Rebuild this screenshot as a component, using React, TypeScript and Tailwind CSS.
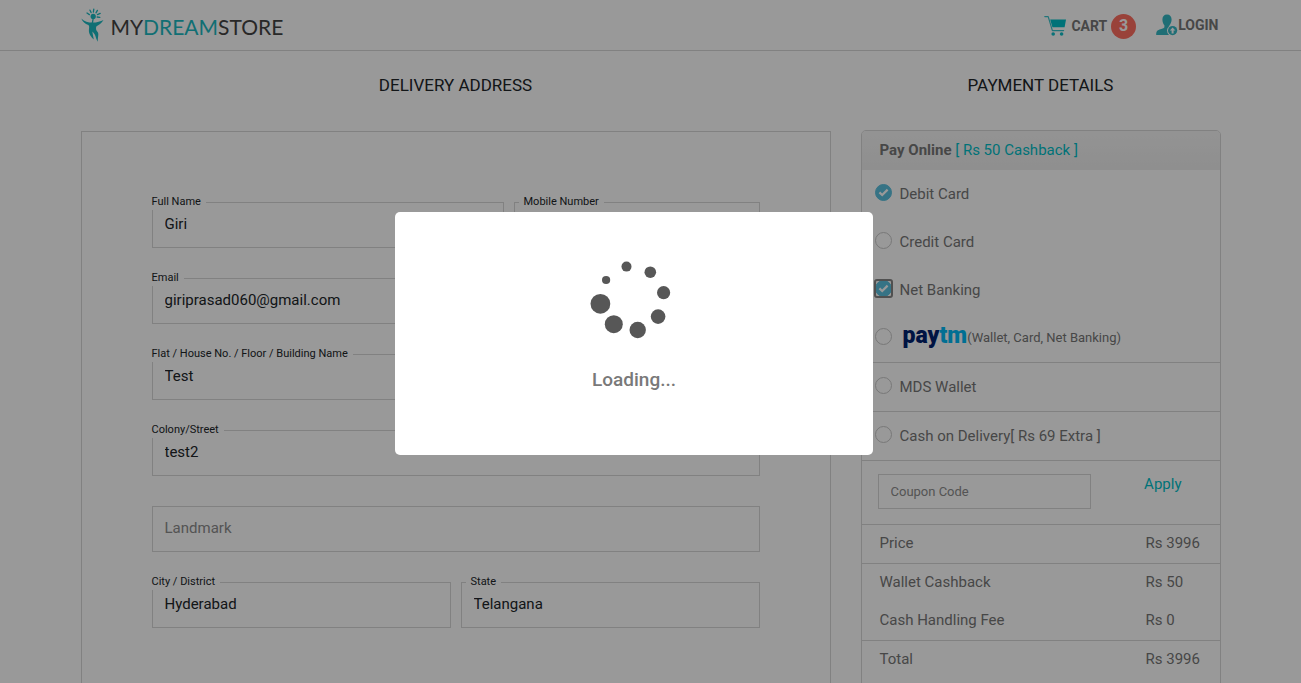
import React from "react";

function Logo() {
  return (
    <a href="#home" aria-label="MyDreamStore" className="flex items-center gap-1.5">
      <svg width="24" height="34" viewBox="0 0 24 34" fill="none" className="shrink-0">
        <path d="M0.3 10.4 C3.5 13.6 7 14.6 11.5 14.6 C16 14.6 19.5 13.5 22.5 12 C20.5 15.6 17.6 17.2 15.5 18.2 C14.4 20.4 15.2 22.5 16.6 24 C18.2 26 16.6 29 16.9 33.8 C14.9 31 14.8 28 13.6 26.2 C12.9 25 12 24.2 11.4 23.4 C11.6 26 12.4 28.4 12.8 31.6 C10.1 29 7.6 25.6 7.9 22 C8.1 19.5 8.6 18.3 7.4 17 C4 15.6 1.6 13.5 0.3 10.4Z" fill="#1cb9c1" />
        <circle cx="12.2" cy="8.4" r="2.6" fill="#1cb9c1" />
        <path d="M12.2 10.5 L11.4 14.8 M12.8 1.2 L12.4 4 M9 2.2 L10.1 4.6 M16.4 2.4 L15 4.8 M6 5 L8.4 6.6 M19.2 5.4 L16.4 6.6 M16.2 9 L18.8 9.4" stroke="#1cb9c1" strokeWidth="1.3" strokeLinecap="round" />
      </svg>
      <span className="pt-1 font-['Lato',sans-serif] text-[21px] leading-8 text-[#444]">
        MY<span className="text-[#1cb9c1]">DREAM</span>STORE
      </span>
    </a>
  );
}

function CartIcon() {
  return (
    <svg width="23" height="22" viewBox="0 0 23 22" fill="none" className="shrink-0">
      <path d="M0.8 1.6 H4.2 L8.4 15.6 H19.6" stroke="#3ac3cb" strokeWidth="1.2" strokeLinecap="round" strokeLinejoin="round" />
      <path d="M6.2 4.4 H22 L20.6 12.2 H8.4Z" fill="#00bfc8" />
      <circle cx="9.2" cy="19" r="1.8" fill="#12bfc8" />
      <circle cx="17.6" cy="19" r="1.8" fill="#12bfc8" />
    </svg>
  );
}

function LoginIcon() {
  return (
    <svg width="22" height="23" viewBox="0 0 22 23" className="shrink-0">
      <path d="M11 0.5 C14 0.5 15.6 2.5 15.6 5.5 C15.6 8 14.6 10 13.4 11.2 V13.4 C15 14.4 19 15 19.5 18 V21 H0.2 C0.2 17.5 1 16.6 3.5 15.6 C6 14.6 8 14.2 8.4 13.2 V11.2 C7.2 10 6.4 8 6.4 5.5 C6.4 2.5 8 0.5 11 0.5Z" fill="#35b8c4" />
      <circle cx="16.6" cy="16.6" r="5.6" fill="#fff" />
      <circle cx="16.6" cy="16.6" r="4.6" fill="#35b8c4" />
      <path d="M16.6 13.4 L19.4 16.4 H17.6 V19.4 H15.6 V16.4 H13.8Z" fill="#fff" />
    </svg>
  );
}

type FieldProps = { id: string; label: string; value?: string; inset?: boolean };

function Field({ id, label, value, inset }: FieldProps) {
  const floating = value !== undefined;
  return (
    <div className="relative">
      {floating && (
        <label
          htmlFor={id}
          className={
            inset
              ? "absolute -top-2 left-[5px] bg-white px-[5px] text-[11px] leading-4 text-[#212529]"
              : "absolute -top-2 -left-[5px] bg-white px-[5px] text-[11px] leading-4 text-[#212529]"
          }
        >
          {label}
        </label>
      )}
      <input
        id={id}
        type="text"
        defaultValue={value}
        aria-label={floating ? undefined : label}
        placeholder={floating ? undefined : label}
        className="block h-[46px] w-full border border-[#d8d8d8] bg-white px-3 pb-0.5 text-[15px] text-[#212529] outline-none placeholder:text-[#8c8c8c]"
      />
    </div>
  );
}

type OptionProps = { id: string; checked?: boolean; focused?: boolean; divider?: boolean; children: React.ReactNode };

function Option({ id, checked, focused, divider, children }: OptionProps) {
  return (
    <div className={divider ? "flex h-[49px] items-center border-b border-[#d8d8d8] pl-3" : "flex h-12 items-center pl-3"}>
      <span
        className={
          focused
            ? "mb-[3px] grid size-[19px] place-items-center rounded-[3px] outline-2 -outline-offset-2 outline-[#858585]"
            : "mb-[3px] grid size-[19px] place-items-center"
        }
      >
        <input
          id={id}
          type="checkbox"
          defaultChecked={checked}
          className="col-start-1 row-start-1 size-[17px] appearance-none rounded-full border border-[#c8c8c8] bg-white outline-none checked:border-[#5bc0de] checked:bg-[#5bc0de]"
        />
        {checked && (
          <svg width="11" height="9" viewBox="0 0 11 9" fill="none" className="pointer-events-none col-start-1 row-start-1">
            <path d="M1.4 4.4 L4.2 7 L9.6 1.6" stroke="#fff" strokeWidth="2.2" />
          </svg>
        )}
      </span>
      <label htmlFor={id} className="flex items-center pl-[7px]">
        {children}
      </label>
    </div>
  );
}

function Amount({ name, value, divider }: { name: string; value: string; divider?: boolean }) {
  return (
    <div
      className={
        divider
          ? "grid h-[39px] grid-cols-[1fr_74px] items-center border-b border-[#d8d8d8] pb-0.5 pl-[18px]"
          : "grid h-[38px] grid-cols-[1fr_74px] items-center pb-0.5 pl-[18px]"
      }
    >
      <dt>{name}</dt>
      <dd>{value}</dd>
    </div>
  );
}

const dots = [
  [626.5, 266.6, 5],
  [650.3, 272.2, 5.8],
  [663.6, 292.7, 6.6],
  [658.1, 316.6, 7.3],
  [637.7, 330, 8.2],
  [613.8, 324.2, 9],
  [600.4, 303.8, 9.9],
  [606.1, 280, 4.1],
];

function LoadingDialog() {
  return (
    <div className="fixed inset-0 z-10 flex items-center justify-center bg-black/40 pr-[33px] pb-4">
      <div role="dialog" aria-label="Loading" className="flex w-[478px] flex-col items-center rounded-[5px] bg-white pt-12 pb-[61px]">
        <svg width="88" height="80" viewBox="590 260 88 80">
          {dots.map(([x, y, r]) => (
            <circle key={x} cx={x} cy={y} r={r} fill="#575757" />
          ))}
        </svg>
        <h2 className="mt-[26px] text-[19px] leading-7 font-medium text-[#797979]">Loading...</h2>
      </div>
    </div>
  );
}

export default function App() {
  return (
    <div className="h-screen overflow-hidden bg-white font-['Roboto',sans-serif] text-[15px] text-[#777]">
      <header className="border-b border-[#d8d8d8]">
        <div className="mx-auto flex h-[50px] max-w-[1140px] items-center justify-between">
          <Logo />
          <nav className="flex items-center pr-0.5 text-[14px] font-bold">
            <a href="#cart" className="flex items-center pt-0.5">
              <CartIcon />
              <span className="ml-1">CART</span>
              <span className="ml-1 grid size-[25px] place-items-center rounded-full bg-[#ff6f61] text-[16px] text-white">3</span>
            </a>
            <a href="#login" className="ml-5 flex items-center">
              <LoginIcon />
              LOGIN
            </a>
          </nav>
        </div>
      </header>

      <main className="mx-auto grid max-w-[1140px] grid-cols-[750fr_360fr] gap-x-[30px] pt-5">
        <section>
          <h1 className="mb-8 text-center text-[17px] leading-7 text-[#212529]">DELIVERY ADDRESS</h1>
          <form className="flex min-h-[640px] flex-col gap-[30px] border border-[#d8d8d8] px-[70px] pt-[70px]">
            <div className="grid grid-cols-[352fr_246fr] gap-2.5">
              <Field id="name" label="Full Name" value="Giri" />
              <Field id="mobile" label="Mobile Number" value="" inset />
            </div>
            <Field id="email" label="Email" value="giriprasad060@gmail.com" />
            <Field id="flat" label="Flat / House No. / Floor / Building Name" value="Test" />
            <Field id="street" label="Colony/Street" value="test2" />
            <Field id="landmark" label="Landmark" />
            <div className="grid grid-cols-2 gap-2.5">
              <Field id="city" label="City / District" value="Hyderabad" />
              <Field id="state" label="State" value="Telangana" inset />
            </div>
          </form>
        </section>

        <section>
          <h1 className="mb-[31px] text-center text-[17px] leading-7 text-[#212529]">PAYMENT DETAILS</h1>
          <div className="min-h-[640px] rounded-[5px] border border-[#d8d8d8]">
            <h2 className="h-[39px] rounded-t-[4px] bg-linear-to-b from-[#f6f6f6] to-[#eee] pl-[18px] leading-[38px]">
              <b>Pay Online</b> <span className="text-[#00bfc8]">[ Rs 50 Cashback ]</span>
            </h2>
            <Option id="debit" checked>Debit Card</Option>
            <Option id="credit">Credit Card</Option>
            <Option id="net" checked focused>Net Banking</Option>
            <Option id="paytm" divider>
              <span className="pl-[3px] pb-1 text-[23px] leading-6 font-black text-[#002270]">
                pay<span className="text-[#00b9f5]">tm</span>
              </span>
              <span className="text-[13px]">(Wallet, Card, Net Banking)</span>
            </Option>
            <Option id="mds" divider>MDS Wallet</Option>
            <Option id="cod" divider>Cash on Delivery[ Rs 69 Extra ]</Option>
            <div className="flex h-16 items-start justify-between border-b border-[#d8d8d8] pt-[13px] pr-[38px] pl-4">
              <input
                type="text"
                aria-label="Coupon Code"
                placeholder="Coupon Code"
                className="h-[35px] w-[213px] border border-[#d8d8d8] bg-white px-3 text-[13px] outline-none placeholder:text-[#8c8c8c]"
              />
              <button type="button" className="leading-5 text-[#00bfc8]">Apply</button>
            </div>
            <dl>
              <Amount name="Price" value="Rs 3996" divider />
              <Amount name="Wallet Cashback" value="Rs 50" />
              <Amount name="Cash Handling Fee" value="Rs 0" divider />
              <Amount name="Total" value="Rs 3996" />
            </dl>
          </div>
        </section>
      </main>

      <LoadingDialog />
    </div>
  );
}
